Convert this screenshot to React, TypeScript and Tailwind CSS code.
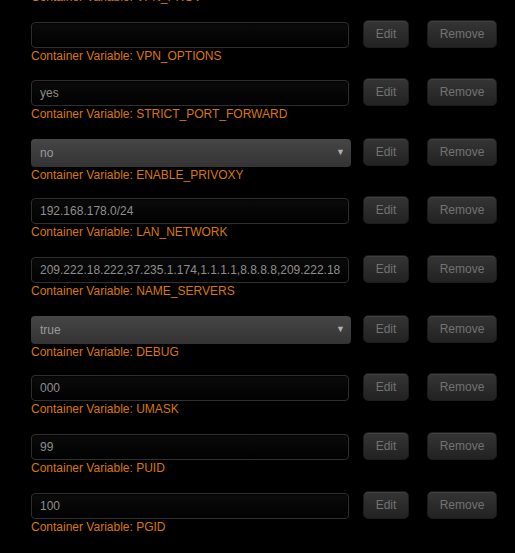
import React from 'react';

type Row = {
  name: string;
  value: string;
  kind: 'text' | 'select';
};

const rows: Row[] = [
  { name: 'VPN_OPTIONS', value: '', kind: 'text' },
  { name: 'STRICT_PORT_FORWARD', value: 'yes', kind: 'text' },
  { name: 'ENABLE_PRIVOXY', value: 'no', kind: 'select' },
  { name: 'LAN_NETWORK', value: '192.168.178.0/24', kind: 'text' },
  {
    name: 'NAME_SERVERS',
    value: '209.222.18.222,37.235.1.174,1.1.1.1,8.8.8.8,209.222.18.218,37.235.1.177,1.0.0.1,8.8.4.4',
    kind: 'text',
  },
  { name: 'DEBUG', value: 'true', kind: 'select' },
  { name: 'UMASK', value: '000', kind: 'text' },
  { name: 'PUID', value: '99', kind: 'text' },
  { name: 'PGID', value: '100', kind: 'text' },
];

const label = 'text-[12px] leading-4 text-[#d97800]';
const btn =
  'h-[28px] rounded-[5px] border border-[#1c1c1c] bg-gradient-to-b from-[#353535] to-[#222] text-[12px] text-[#727272] shadow-[inset_0_1px_0_rgba(255,255,255,0.06)]';

function Field({ row }: { row: Row }) {
  if (row.kind === 'select') {
    return (
      <div className="flex h-[28px] w-[320px] items-center justify-between rounded-[4px] bg-gradient-to-b from-[#464646] to-[#333] pl-[9px] pr-[6px] text-[12px] text-[#9a9a9a]">
        <span>{row.value}</span>
        <span className="text-[9px] text-[#b0b0b0]">▼</span>
      </div>
    );
  }
  return (
    <input
      readOnly
      value={row.value}
      className="block h-[26px] w-[318px] rounded-[4px] border border-[#2f2f2f] bg-gradient-to-b from-[#0c0c0c] to-[#020202] px-[8px] text-[12px] text-[#8e8e8e] shadow-[inset_0_1px_2px_rgba(0,0,0,0.8)] outline-none"
    />
  );
}

export default function App() {
  return (
    <div
      className="min-h-screen overflow-hidden bg-black pl-[31px]"
      style={{ fontFamily: '"Liberation Sans", Arial, sans-serif' }}
    >
      <div className={`-mt-[11px] h-[33px] ${label}`}>Container Variable: VPN_PROV</div>
      {rows.map((row, i) => (
        <div key={row.name} className={`flex items-start ${i === 0 ? 'h-[58px]' : 'h-[59px]'}`}>
          <div className="w-[332px]">
            <Field row={row} />
            <div className={label}>Container Variable: {row.name}</div>
          </div>
          <div className={`flex gap-[18px] ${row.kind === 'select' ? '-mt-[1px]' : '-mt-[2px]'}`}>
            <button className={`${btn} w-[46px]`}>Edit</button>
            <button className={`${btn} w-[70px]`}>Remove</button>
          </div>
        </div>
      ))}
    </div>
  );
}
